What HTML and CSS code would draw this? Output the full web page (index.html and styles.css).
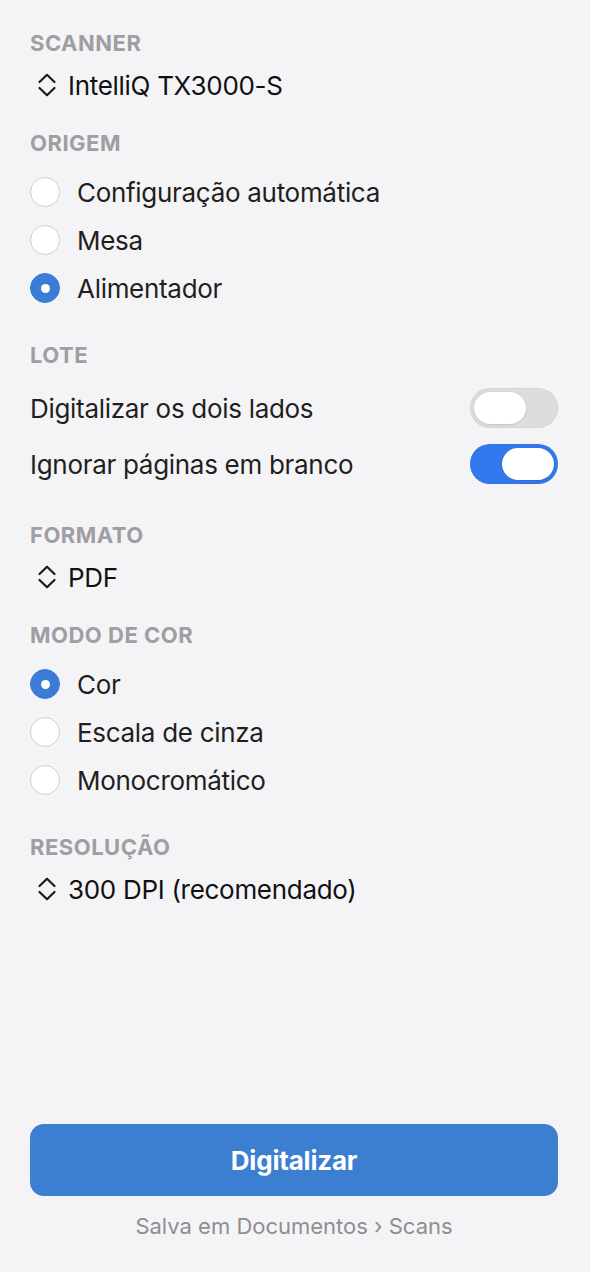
FILE: index.html
```html
<!DOCTYPE html>
<html lang="pt">
<head>
<meta charset="utf-8">
<title>Digitalizar</title>
<link rel="stylesheet" href="styles.css">
</head>
<body>
<main class="panel">
  <section class="section">
    <h2 class="section-title">Scanner</h2>
    <div class="select">
      <svg class="chevrons" viewBox="0 0 20 26" width="20" height="26" aria-hidden="true"><path d="M2.5 10 L10 2.8 L17.5 10"/><path d="M2.5 16 L10 23.2 L17.5 16"/></svg>
      <span>IntelliQ TX3000-S</span>
    </div>
  </section>

  <section class="section">
    <h2 class="section-title">Origem</h2>
    <ul class="list">
      <li class="radio-row"><span class="radio"></span><span>Configuração automática</span></li>
      <li class="radio-row"><span class="radio"></span><span>Mesa</span></li>
      <li class="radio-row"><span class="radio checked"></span><span>Alimentador</span></li>
    </ul>
  </section>

  <section class="section">
    <h2 class="section-title">Lote</h2>
    <ul class="list">
      <li class="toggle-row"><span>Digitalizar os dois lados</span><span class="toggle"><span class="knob"></span></span></li>
      <li class="toggle-row"><span>Ignorar páginas em branco</span><span class="toggle on"><span class="knob"></span></span></li>
    </ul>
  </section>

  <section class="section">
    <h2 class="section-title">Formato</h2>
    <div class="select">
      <svg class="chevrons" viewBox="0 0 20 26" width="20" height="26" aria-hidden="true"><path d="M2.5 10 L10 2.8 L17.5 10"/><path d="M2.5 16 L10 23.2 L17.5 16"/></svg>
      <span>PDF</span>
    </div>
  </section>

  <section class="section">
    <h2 class="section-title">Modo de cor</h2>
    <ul class="list">
      <li class="radio-row"><span class="radio checked"></span><span>Cor</span></li>
      <li class="radio-row"><span class="radio"></span><span>Escala de cinza</span></li>
      <li class="radio-row"><span class="radio"></span><span>Monocromático</span></li>
    </ul>
  </section>

  <section class="section">
    <h2 class="section-title">Resolução</h2>
    <div class="select">
      <svg class="chevrons" viewBox="0 0 20 26" width="20" height="26" aria-hidden="true"><path d="M2.5 10 L10 2.8 L17.5 10"/><path d="M2.5 16 L10 23.2 L17.5 16"/></svg>
      <span>300 DPI (recomendado)</span>
    </div>
  </section>

  <footer class="actions">
    <button class="primary" type="button">Digitalizar</button>
    <p class="destination">Salva em Documentos › Scans</p>
  </footer>
</main>
</body>
</html>
```

FILE: styles.css
```css
* { box-sizing: border-box; }

html, body {
  margin: 0;
  padding: 0;
  background: #f4f4f6;
}

body {
  font-family: Inter, "Noto Sans", "Liberation Sans", sans-serif;
  color: #1f1f21;
}

.panel {
  height: 1272px;
  display: flex;
  flex-direction: column;
  padding: 29px 32px 32px 30px;
}

.section + .section {
  margin-top: 20px;
}

.section-title {
  margin: 0;
  font-size: 22px;
  line-height: 28px;
  font-weight: 700;
  text-transform: uppercase;
  letter-spacing: 0.5px;
  color: #9e9ea3;
}

.select {
  margin-top: 4px;
  height: 48px;
  display: flex;
  align-items: center;
  font-size: 26px;
  letter-spacing: -0.3px;
  color: #111113;
}

.chevrons {
  margin-left: 7px;
  margin-right: 11px;
  fill: none;
  stroke: #1a1a1c;
  stroke-width: 2.2;
  stroke-linecap: round;
  stroke-linejoin: round;
}

.list {
  list-style: none;
  margin: 11px 0 9px;
  padding: 0;
}

.radio-row {
  height: 48px;
  display: flex;
  align-items: center;
  gap: 17px;
  font-size: 26px;
  letter-spacing: -0.3px;
}

.radio {
  width: 30px;
  height: 30px;
  border-radius: 50%;
  background: #ffffff;
  border: 1px solid #cfcfd3;
  flex: none;
  display: flex;
  align-items: center;
  justify-content: center;
}

.radio.checked {
  background: #3b7dd6;
  border-color: #3b7dd6;
}

.radio.checked::after {
  content: "";
  width: 9px;
  height: 9px;
  border-radius: 50%;
  background: #ffffff;
}

.toggle-row {
  height: 56px;
  display: flex;
  align-items: center;
  justify-content: space-between;
  font-size: 26px;
  letter-spacing: -0.3px;
}

.toggle {
  width: 88px;
  height: 40px;
  border-radius: 20px;
  background: #dddde0;
  box-shadow: inset 0 0 0 1px rgba(0, 0, 0, 0.04);
  padding: 4px;
  display: flex;
  justify-content: flex-start;
  flex: none;
}

.toggle.on {
  background: #3478f0;
  justify-content: flex-end;
}

.knob {
  width: 52px;
  height: 32px;
  border-radius: 16px;
  background: #ffffff;
  box-shadow: 0 0.5px 2px rgba(0, 0, 0, 0.18);
}

.actions {
  margin-top: auto;
  display: flex;
  flex-direction: column;
  align-items: stretch;
}

.primary {
  height: 72px;
  border: none;
  border-radius: 14px;
  background: #3c7ecf;
  color: #ffffff;
  font-family: Inter, "Noto Sans", "Liberation Sans", sans-serif;
  font-size: 26px;
  font-weight: 700;
  letter-spacing: -0.2px;
  padding: 0;
}

.destination {
  margin: 16px 0 0;
  text-align: center;
  font-size: 22px;
  line-height: 28px;
  color: #8e8e93;
}
```
